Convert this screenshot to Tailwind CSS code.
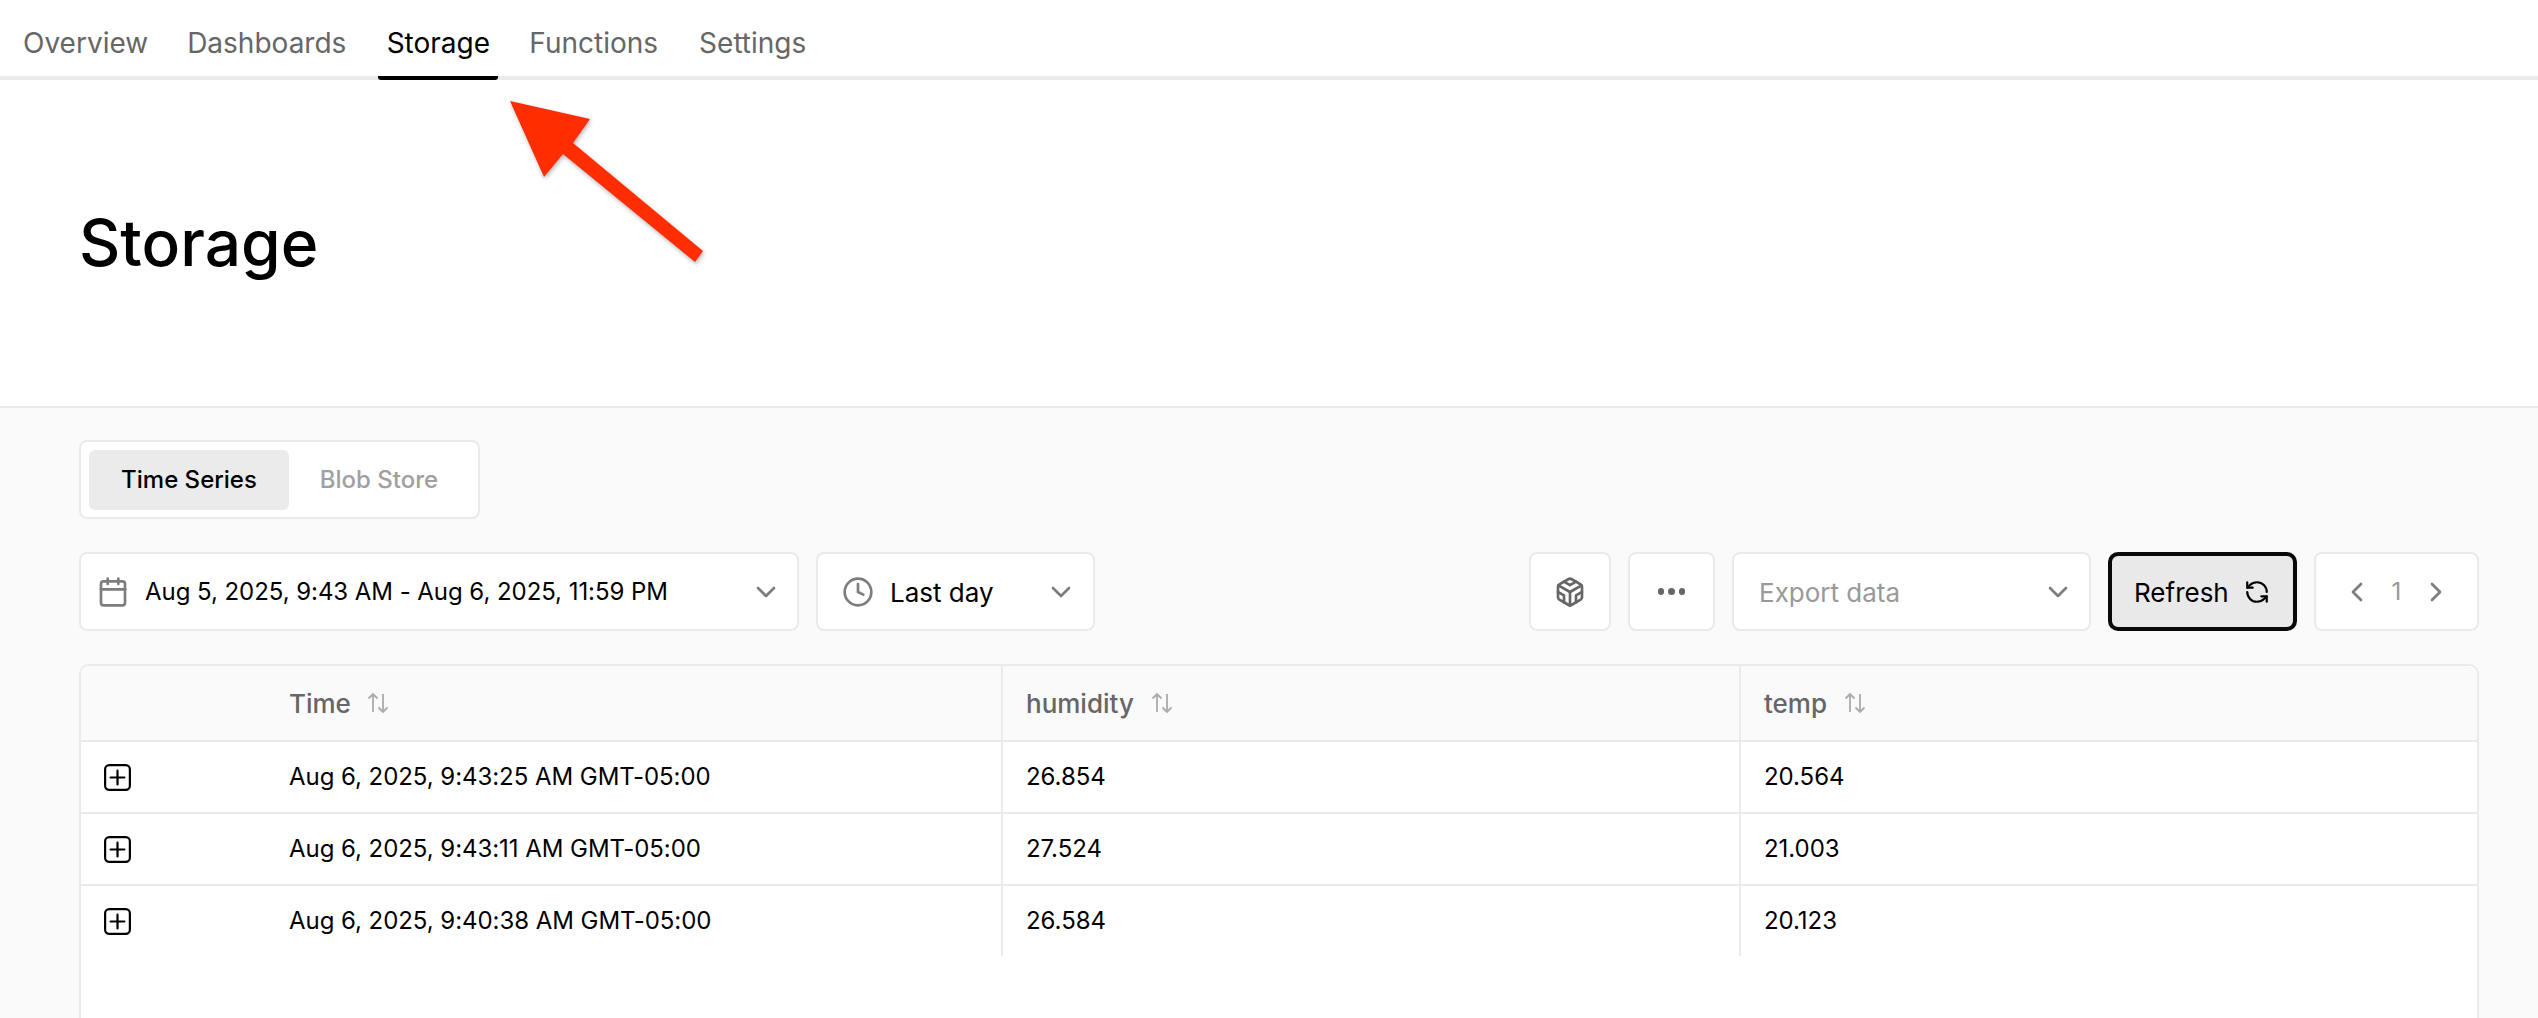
<!DOCTYPE html>
<html>
<head>
<meta charset="utf-8">
<script src="https://cdn.jsdelivr.net/npm/@tailwindcss/browser@4"></script>
</head>
<body class="bg-white">
<div class="relative w-[2538px] h-[1018px] overflow-hidden font-['Inter',sans-serif] text-black bg-[#fafafa]">
  <!-- tabs -->
  <div class="bg-white h-[80px] border-b-4 border-[#eaeaea] flex pl-[8px] text-[28px] text-[#666]">
    <div class="relative px-[15px] h-[80px] flex items-center pt-[6px]">Overview</div>
    <div class="relative ml-[9px] px-[15px] h-[80px] flex items-center pt-[6px]">Dashboards</div>
    <div class="relative ml-[17px] px-[8px] h-[80px] w-[120px] flex items-center justify-center pt-[10px] text-black border-b-4 border-black rounded-b-[3px]">Storage</div>
    <div class="relative ml-[16px] px-[15px] h-[80px] flex items-center pt-[6px]">Functions</div>
    <div class="relative ml-[11px] px-[15px] h-[80px] flex items-center pt-[6px]">Settings</div>
  </div>
  <!-- title -->
  <div class="bg-white h-[328px] border-b-2 border-[#eaeaea] pl-[79px] pt-[119px]">
    <h1 class="text-[64px] leading-[88px] font-[550]">Storage</h1>
  </div>
  <!-- content -->
  <div class="pl-[79px] w-[2479px] pt-[32px]">
    <div class="w-[401px] h-[79px] bg-white border-2 border-[#eaeaea] rounded-[8px] flex items-center pl-[8px] text-[24px] font-medium">
      <div class="w-[200px] h-[60px] rounded-[6px] bg-[#ebebeb] flex items-center justify-center">Time Series</div>
      <div class="w-[180px] text-center text-[#a0a0a0]">Blob Store</div>
    </div>
    <div class="mt-[33px] flex items-stretch h-[79px]">
      <div class="w-[720px] bg-white border-2 border-[#eaeaea] rounded-[8px] flex items-center pl-[16px] pr-[15px] text-[24px] tracking-[-0.05px]">
        <svg class="w-[32px] h-[32px] shrink-0 text-[#7d7d7d]" viewBox="0 0 24 24" fill="none" stroke="currentColor" stroke-width="2" stroke-linecap="round" stroke-linejoin="round"><path d="M8 2v4M16 2v4"/><rect x="3" y="4" width="18" height="18" rx="2"/><path d="M3 10h18"/></svg>
        <span class="ml-[16px]">Aug 5, 2025, 9:43 AM - Aug 6, 2025, 11:59 PM</span>
        <svg class="ml-auto w-[32px] h-[32px] text-[#7d7d7d]" viewBox="0 0 24 24" fill="none" stroke="currentColor" stroke-width="2" stroke-linecap="round" stroke-linejoin="round"><path d="m6 9 6 6 6-6"/></svg>
      </div>
      <div class="ml-[17px] w-[279px] bg-white border-2 border-[#eaeaea] rounded-[8px] flex items-center pl-[24px] pr-[16px] text-[26px]">
        <svg class="w-[32px] h-[32px] shrink-0 text-[#7d7d7d]" viewBox="0 0 24 24" fill="none" stroke="currentColor" stroke-width="2" stroke-linecap="round" stroke-linejoin="round"><circle cx="12" cy="12" r="10"/><path d="M12 6v6l4 2"/></svg>
        <span class="ml-[16px] pt-[2px]">Last day</span>
        <svg class="ml-auto w-[32px] h-[32px] text-[#7d7d7d]" viewBox="0 0 24 24" fill="none" stroke="currentColor" stroke-width="2" stroke-linecap="round" stroke-linejoin="round"><path d="m6 9 6 6 6-6"/></svg>
      </div>
      <div class="ml-auto w-[82px] bg-white border-2 border-[#eaeaea] rounded-[8px] flex items-center justify-center">
        <svg class="w-[32px] h-[32px] text-[#666]" viewBox="0 0 24 24" fill="none" stroke="currentColor" stroke-width="2" stroke-linecap="round" stroke-linejoin="round"><path d="M21 16V8a2 2 0 0 0-1-1.730l-7-4a2 2 0 0 0-2 0l-7 4A2 2 0 0 0 3 8v8a2 2 0 0 0 1 1.730l7 4a2 2 0 0 0 2 0l7-4A2 2 0 0 0 21 16z"/><path d="M7.500 4.210 12 6.810l4.500-2.600"/><path d="M7.500 19.790V14.600L3 12"/><path d="M21 12l-4.500 2.600v5.190"/><path d="M3.270 6.960 12 12.010l8.730-5.050"/><path d="M12 22.080V12"/></svg>
      </div>
      <div class="ml-[17px] w-[87px] bg-white border-2 border-[#eaeaea] rounded-[8px] flex items-center justify-center gap-[4px]">
        <span class="w-[6.500px] h-[6.500px] rounded-full bg-[#666]"></span><span class="w-[6.500px] h-[6.500px] rounded-full bg-[#666]"></span><span class="w-[6.500px] h-[6.500px] rounded-full bg-[#666]"></span>
      </div>
      <div class="ml-[17px] w-[359px] bg-white border-2 border-[#eaeaea] rounded-[8px] flex items-center pl-[25px] pr-[15px] text-[26px] text-[#999]">
        <span class="pt-[2px]">Export data</span>
        <svg class="ml-auto w-[32px] h-[32px] text-[#7d7d7d]" viewBox="0 0 24 24" fill="none" stroke="currentColor" stroke-width="2" stroke-linecap="round" stroke-linejoin="round"><path d="m6 9 6 6 6-6"/></svg>
      </div>
      <div class="ml-[17px] w-[189px] bg-[#e9e9e9] border-4 border-[#0a0a0a] rounded-[10px] flex items-center pl-[22px] text-[26px]">
        <span class="pt-[2px]">Refresh</span>
        <svg class="ml-[15px] w-[26px] h-[26px] text-black" viewBox="0 0 24 24" fill="none" stroke="currentColor" stroke-width="2" stroke-linecap="round" stroke-linejoin="round"><path d="M21 12a9 9 0 0 0-9-9 9.750 9.750 0 0 0-6.740 2.740L3 8"/><path d="M3 3v5h5"/><path d="M3 12a9 9 0 0 0 9 9 9.750 9.750 0 0 0 6.740-2.740L21 16"/><path d="M16 16h5v5"/></svg>
      </div>
      <div class="ml-[17px] w-[165px] bg-white border-2 border-[#eaeaea] rounded-[8px] flex items-center justify-center text-[24px] text-[#999]">
        <svg class="w-[32px] h-[32px] text-[#7d7d7d]" viewBox="0 0 24 24" fill="none" stroke="currentColor" stroke-width="2" stroke-linecap="round" stroke-linejoin="round"><path d="m15 18-6-6 6-6"/></svg>
        <span class="mx-[19px]">1</span>
        <svg class="w-[32px] h-[32px] text-[#7d7d7d]" viewBox="0 0 24 24" fill="none" stroke="currentColor" stroke-width="2" stroke-linecap="round" stroke-linejoin="round"><path d="m9 18 6-6-6-6"/></svg>
      </div>
    </div>
    <!-- table -->
    <div class="mt-[33px] h-[400px] border-x-2 border-t-2 border-[#eaeaea] rounded-t-[10px] bg-white overflow-hidden">
      <div class="flex h-[76px] bg-[#fafafa] border-b-2 border-[#eaeaea] text-[26px] text-[#666] font-medium">
        <div class="w-[922px] pl-[208px] border-r-2 border-[#eaeaea] flex items-center">Time
          <svg class="ml-[16px] w-[22px] h-[22px] text-[#aaa]" viewBox="0 0 22 22" fill="none" stroke="currentColor" stroke-width="1.8"><path d="M6 20V2M1.500 6.500L6 2l4.500 4.500M16 2v18M11.500 15.500L16 20l4.500-4.500"/></svg>
        </div>
        <div class="w-[738px] pl-[23px] border-r-2 border-[#eaeaea] flex items-center">humidity
          <svg class="ml-[17px] w-[22px] h-[22px] text-[#aaa]" viewBox="0 0 22 22" fill="none" stroke="currentColor" stroke-width="1.8"><path d="M6 20V2M1.500 6.500L6 2l4.500 4.500M16 2v18M11.500 15.500L16 20l4.500-4.500"/></svg>
        </div>
        <div class="flex-1 pl-[23px] flex items-center">temp
          <svg class="ml-[17px] w-[22px] h-[22px] text-[#aaa]" viewBox="0 0 22 22" fill="none" stroke="currentColor" stroke-width="1.8"><path d="M6 20V2M1.500 6.500L6 2l4.500 4.500M16 2v18M11.500 15.500L16 20l4.500-4.500"/></svg>
        </div>
      </div>
      <div class="flex h-[72px] border-b-2 border-[#eaeaea] text-[24px] tracking-[-0.05px]">
        <div class="w-[922px] border-r-2 border-[#eaeaea] flex items-center pl-[20px]">
          <svg class="w-[33px] h-[33px] text-black" viewBox="0 0 24 24" fill="none" stroke="currentColor" stroke-width="1.600" stroke-linecap="round" stroke-linejoin="round"><rect x="3" y="3" width="18" height="18" rx="3"/><path d="M7 12h10M12 7v10"/></svg>
          <span class="ml-[155px]">Aug 6, 2025, 9:43:25 AM GMT-05:00</span>
        </div>
        <div class="w-[738px] pl-[23px] border-r-2 border-[#eaeaea] flex items-center">26.854</div>
        <div class="flex-1 pl-[23px] flex items-center">20.564</div>
      </div>
      <div class="flex h-[72px] border-b-2 border-[#eaeaea] text-[24px] tracking-[-0.05px]">
        <div class="w-[922px] border-r-2 border-[#eaeaea] flex items-center pl-[20px]">
          <svg class="w-[33px] h-[33px] text-black" viewBox="0 0 24 24" fill="none" stroke="currentColor" stroke-width="1.600" stroke-linecap="round" stroke-linejoin="round"><rect x="3" y="3" width="18" height="18" rx="3"/><path d="M7 12h10M12 7v10"/></svg>
          <span class="ml-[155px]">Aug 6, 2025, 9:43:11 AM GMT-05:00</span>
        </div>
        <div class="w-[738px] pl-[23px] border-r-2 border-[#eaeaea] flex items-center">27.524</div>
        <div class="flex-1 pl-[23px] flex items-center">21.003</div>
      </div>
      <div class="flex h-[70px] text-[24px] tracking-[-0.05px]">
        <div class="w-[922px] border-r-2 border-[#eaeaea] flex items-center pl-[20px]">
          <svg class="w-[33px] h-[33px] text-black" viewBox="0 0 24 24" fill="none" stroke="currentColor" stroke-width="1.600" stroke-linecap="round" stroke-linejoin="round"><rect x="3" y="3" width="18" height="18" rx="3"/><path d="M7 12h10M12 7v10"/></svg>
          <span class="ml-[155px]">Aug 6, 2025, 9:40:38 AM GMT-05:00</span>
        </div>
        <div class="w-[738px] pl-[23px] border-r-2 border-[#eaeaea] flex items-center">26.584</div>
        <div class="flex-1 pl-[23px] flex items-center">20.123</div>
      </div>
    </div>
  </div>
  <!-- annotation arrow -->
  <svg class="absolute left-0 top-0 w-[2538px] h-[1018px] pointer-events-none" viewBox="0 0 2538 1018">
    <polygon points="510,101 590,119 573,143 703,251 695,262 563,154 544,177" fill="#ff2d00" style="filter:drop-shadow(1px 2px 2px rgba(0,0,0,.3))"/>
  </svg>
</div>
</body>
</html>
